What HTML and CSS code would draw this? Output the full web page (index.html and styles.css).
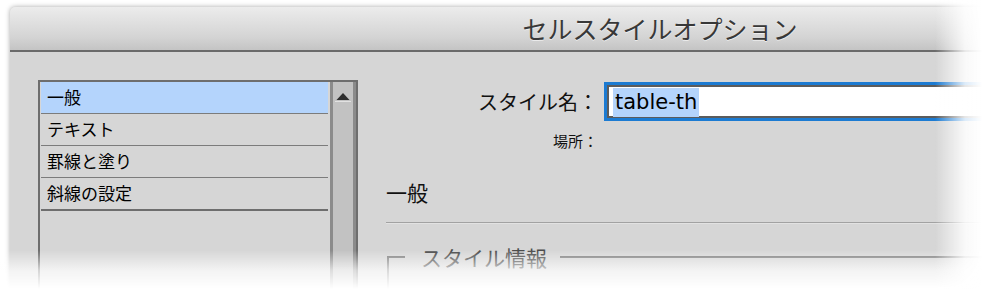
FILE: index.html
```html
<!DOCTYPE html>
<html lang="ja">
<head>
<meta charset="utf-8">
<title>セルスタイルオプション</title>
<link rel="stylesheet" href="styles.css">
</head>
<body>
<div class="window">
  <div class="titlebar">セルスタイルオプション</div>
  <div class="content">
    <div class="listbox">
      <ul class="items">
        <li class="item selected">一般</li>
        <li class="item">テキスト</li>
        <li class="item">罫線と塗り</li>
        <li class="item last">斜線の設定</li>
      </ul>
      <div class="scrollbar">
        <svg class="arrow" width="26" height="12" viewBox="0 0 26 12"><polygon points="6.5,9 13,2 19.5,9" fill="#2e2e2e"/><line x1="5" y1="10.5" x2="21" y2="10.5" stroke="#e2e2e2" stroke-width="1"/></svg>
      </div>
    </div>
    <div class="pane">
      <div class="form">
        <div class="label">スタイル名：</div>
        <div class="field"><span class="sel">table-th</span></div>
        <div class="label small">場所：</div>
        <div></div>
      </div>
      <h2 class="section">一般</h2>
      <div class="rule"></div>
      <fieldset class="group"><legend class="legend">スタイル情報</legend></fieldset>
    </div>
  </div>
</div>
<div class="fade"></div>
</body>
</html>
```
FILE: styles.css
```css
html, body {
  margin: 0;
  padding: 0;
  background: #ffffff;
  overflow: hidden;
  width: 984px;
  height: 293px;
}
body {
  font-family: "Noto Sans CJK JP", "DejaVu Sans", sans-serif;
  color: #111;
}
.window {
  margin: 7px 0 0 10px;
  width: 1300px;
  height: 330px;
  border-radius: 5px 5px 0 0;
  background: #d6d6d6;
  box-shadow: 0 0 5px rgba(0, 0, 0, 0.35);
  overflow: hidden;
}
.titlebar {
  box-sizing: border-box;
  height: 45px;
  padding-top: 1px;
  line-height: 41px;
  text-align: center;
  font-size: 25px;
  color: #383838;
  text-shadow: 0 1px 0 rgba(255, 255, 255, 0.6);
  background: linear-gradient(#ececec, #d4d4d4 70%, #c4c4c4);
  border-bottom: 2px solid #6b6b6b;
}
.content {
  display: flex;
  gap: 28px;
  padding: 28px 0 0 28px;
}
.listbox {
  box-sizing: border-box;
  width: 320px;
  height: 260px;
  border: 2px solid #6e6e6e;
  display: flex;
  background: #d6d6d6;
}
.items {
  list-style: none;
  margin: 0;
  padding: 0 2px 0 1px;
  width: 290px;
  box-sizing: border-box;
}
.item {
  height: 31px;
  line-height: 30px;
  border-bottom: 1px solid #7c7c7c;
  padding-left: 6px;
  font-size: 17px;
  color: #000;
}
.item.selected {
  background: #b4d4fc;
}
.item.last {
  border-bottom: 2px solid #6e6e6e;
}
.scrollbar {
  box-sizing: border-box;
  width: 26px;
  background: #c2c2c2;
  border-left: 3px solid #8b8b8b;
  border-right: 3px solid #8b8b8b;
  padding-top: 9px;
  display: flex;
  justify-content: center;
  align-items: flex-start;
}
.arrow {
  display: block;
  flex: none;
}
.pane {
  flex: 1;
}
.form {
  display: grid;
  grid-template-columns: 212px 1fr;
  column-gap: 6px;
  row-gap: 8px;
  margin-top: 2px;
}
.label {
  text-align: right;
  font-size: 20px;
  line-height: 39px;
  color: #111;
  white-space: nowrap;
}
.label.small {
  font-size: 15px;
  line-height: 24px;
}
.field {
  box-sizing: border-box;
  height: 39px;
  border: 3px solid #1c7bd2;
  box-shadow: inset 0 0 0 2px #5c5c5c;
  background: #ffffff;
  padding: 3px 0 0 6px;
}
.sel {
  display: inline-block;
  height: 29px;
  line-height: 29px;
  padding: 0 2px;
  background: #b4d4fc;
  font-family: "DejaVu Sans", sans-serif;
  font-size: 21px;
  color: #000;
}
.section {
  margin: 24px 0 0 0;
  font-size: 21px;
  font-weight: normal;
  line-height: 30px;
  color: #111;
}
.rule {
  margin-top: 15px;
  border-top: 1px solid #a2a2a2;
  border-bottom: 1px solid #e2e2e2;
}
.group {
  margin: 18px 0 0 1px;
  padding: 0 0 0 16px;
  height: 60px;
  border: 2px solid #7e7e7e;
  border-right: none;
  border-bottom: none;
}
.legend {
  padding: 0 13px 0 16px;
  font-size: 21px;
  line-height: 30px;
  color: #4a4a4a;
}
.fade {
  position: fixed;
  inset: 0;
  pointer-events: none;
  background:
    linear-gradient(to right, rgba(255,255,255,0) 935px, rgba(255,255,255,0.85) 965px, #ffffff 982px),
    linear-gradient(to bottom, rgba(255,255,255,0) 250px, rgba(255,255,255,0.7) 270px, #ffffff 289px);
}
```
